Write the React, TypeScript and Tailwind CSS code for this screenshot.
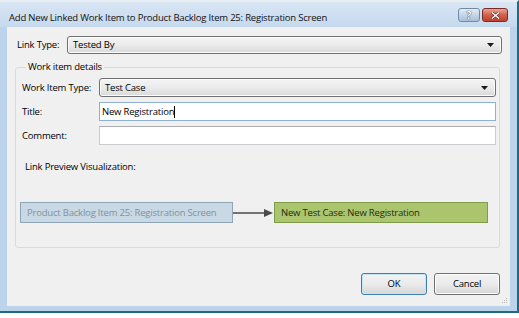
import React from "react";

function ComboArrow() {
  return (
    <svg width="7" height="4" viewBox="0 0 7 4" className="shrink-0">
      <path d="M0 0 H7 L3.5 4 Z" fill="#1a1a1a" />
    </svg>
  );
}

function Combo({ value }: { value: string }) {
  return (
    <div className="flex-1 flex items-center justify-between rounded-[3px] border border-[#707070] bg-gradient-to-b from-[#f4f4f4] via-[#ebebeb] to-[#d9d9d9] pl-[5px] pr-[7px] shadow-[inset_0_0_0_1px_#fcfcfc]">
      <span className="text-[9.5px] tracking-[-0.2px] leading-[14px] text-black">{value}</span>
      <ComboArrow />
    </div>
  );
}

function Row({ label, children }: { label: string; children: React.ReactNode }) {
  return (
    <div className="flex items-center h-[19px]">
      <div className="w-[77px] shrink-0 text-[9.5px] tracking-[-0.2px] leading-[14px] text-black">{label}</div>
      {children}
    </div>
  );
}

export default function App() {
  return (
    <div
      className="w-[519px] h-[318px] bg-white overflow-hidden relative"
      style={{ fontFamily: '"Open Sans", "Noto Sans", sans-serif' }}
    >
      <div className="w-[519px] h-[313px] flex flex-col border-r-2 border-b-2 border-[#1f6a83] bg-[#bcd3ec] border-t-[2px] border-t-[#e9eef3]">
        {/* Title bar */}
        <div className="h-[25px] shrink-0 flex items-start justify-between pl-[9px] pr-[9px] bg-gradient-to-b from-[#d9e6f4] to-[#c5d9ee]">
          <div className="pt-[9px] text-[9.5px] tracking-[-0.2px] leading-[14px] text-[#111]">
            Add New Linked Work Item to Product Backlog Item 25: Registration Screen
          </div>
          <div className="flex gap-[2px] pt-[6px]">
            <div className="w-[22px] h-[14px] rounded-[3px] border border-[#6f8aa6] bg-gradient-to-b from-[#e4edf6] via-[#c5d6e8] to-[#a9c0d9] flex items-center justify-center">
              <span className="text-[10px] leading-[10px] font-bold text-white [text-shadow:0_0_1px_#33475c,0_0_1px_#33475c]">?</span>
            </div>
            <div className="w-[26px] h-[14px] rounded-[3px] border border-[#7a2b22] bg-gradient-to-b from-[#e8a394] via-[#d0604d] to-[#c0402e] flex items-center justify-center">
              <svg width="9" height="7" viewBox="0 0 9 7">
                <path d="M1 0.5 L8 6.5 M8 0.5 L1 6.5" stroke="#5a1a12" strokeWidth="2.6" />
                <path d="M1 0.5 L8 6.5 M8 0.5 L1 6.5" stroke="#ffffff" strokeWidth="1.5" />
              </svg>
            </div>
          </div>
        </div>

        {/* Client area */}
        <div className="flex-1 mx-[7px] mb-[5px] bg-[#f0f0f0] flex flex-col relative">
          {/* Link type */}
          <div className="flex items-center pl-[10px] pr-[8px] pt-[9px] h-[27px]">
            <div className="w-[50px] shrink-0 text-[9.5px] tracking-[-0.2px] leading-[14px] text-black">Link Type:</div>
            <div className="flex-1 h-[18px] flex">
              <Combo value="Tested By" />
            </div>
          </div>

          {/* Group box */}
          <fieldset className="mt-[6px] ml-[8px] mr-[10px] border border-[#d3dce3] rounded-[3px] pl-[6px] pr-[3px] pb-[24px]">
            <legend className="ml-[4px] px-[2px] text-[9.5px] tracking-[-0.2px] leading-[14px] text-black">Work item details</legend>
            <div className="flex flex-col gap-[5px] pt-[4px]">
              <Row label="Work Item Type:">
                <div className="flex-1 h-[19px] flex">
                  <Combo value="Test Case" />
                </div>
              </Row>
              <Row label="Title:">
                <div className="flex-1 h-[19px] border border-[#8eb1d1] bg-white flex items-center pl-[2px]">
                  <span className="text-[9.5px] tracking-[-0.2px] leading-[14px] text-black">New Registration</span>
                  <span className="w-px h-[12px] bg-black" />
                </div>
              </Row>
              <Row label="Comment:">
                <div className="flex-1 h-[19px] border border-[#c9cbcf] border-t-[#abadb3] bg-white" />
              </Row>
            </div>
            <div className="mt-[15px] ml-[3px] text-[9.5px] tracking-[-0.2px] leading-[14px] text-black">Link Preview Visualization:</div>
            <div className="mt-[28px] ml-[-2px] flex items-center">
              <div className="w-[213px] h-[21px] border border-[#8ea5b6] bg-[#c8d8e4] flex items-center pl-[6px]">
                <span className="text-[9.5px] tracking-[-0.2px] leading-[14px] text-[#83929d] whitespace-nowrap">
                  Product Backlog Item 25: Registration Screen
                </span>
              </div>
              <svg width="41" height="10" viewBox="0 0 41 10" className="shrink-0">
                <path d="M0 5 H33" stroke="#4a4a4a" strokeWidth="1.5" />
                <path d="M31 1 L40 5 L31 9 Z" fill="#4a4a4a" />
              </svg>
              <div className="w-[214px] h-[21px] border border-[#7f9c4a] bg-[#abc56f] flex items-center pl-[6px]">
                <span className="text-[9.5px] tracking-[-0.2px] leading-[14px] text-[#1f2a10] whitespace-nowrap">
                  New Test Case: New Registration
                </span>
              </div>
            </div>
          </fieldset>

          {/* Buttons */}
          <div className="mt-[25px] flex justify-end gap-[7px] pr-[10px]">
            <div className="w-[66px] h-[22px] rounded-[3px] border border-[#3c7fb1] bg-gradient-to-b from-[#f2f2f2] via-[#ebebeb] to-[#d6d6d6] shadow-[inset_0_0_0_1px_#c4e5f6] flex items-center justify-center">
              <span className="text-[9.5px] tracking-[-0.2px] leading-[14px] text-black">OK</span>
            </div>
            <div className="w-[66px] h-[22px] rounded-[3px] border border-[#707070] bg-gradient-to-b from-[#f2f2f2] via-[#ebebeb] to-[#d6d6d6] shadow-[inset_0_0_0_1px_#fcfcfc] flex items-center justify-center">
              <span className="text-[9.5px] tracking-[-0.2px] leading-[14px] text-black">Cancel</span>
            </div>
          </div>

          {/* Resize grip */}
          <svg width="6" height="6" viewBox="0 0 6 6" className="absolute right-[2px] bottom-[2px]">
            <rect x="4" y="0" width="1" height="1" fill="#b9b9b9" />
            <rect x="2" y="2" width="1" height="1" fill="#b9b9b9" />
            <rect x="4" y="2" width="1" height="1" fill="#b9b9b9" />
            <rect x="0" y="4" width="1" height="1" fill="#b9b9b9" />
            <rect x="2" y="4" width="1" height="1" fill="#b9b9b9" />
            <rect x="4" y="4" width="1" height="1" fill="#b9b9b9" />
          </svg>
        </div>
      </div>
    </div>
  );
}
